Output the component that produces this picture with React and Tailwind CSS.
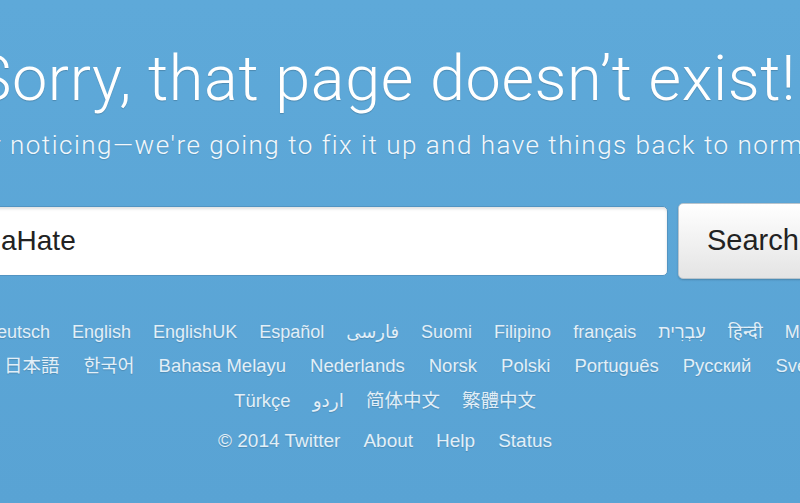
import React from 'react';

const ROW_ONE = ['Deutsch', 'English', 'EnglishUK', 'Español', 'فارسی', 'Suomi', 'Filipino', 'français', 'עִבְרִית', 'हिन्दी', 'Magyar'];
const ROW_TWO = ['日本語', '한국어', 'Bahasa Melayu', 'Nederlands', 'Norsk', 'Polski', 'Português', 'Русский', 'Svenska'];
const ROW_THREE = ['Türkçe', 'اردو', '简体中文', '繁體中文'];
const FOOTER = ['© 2014 Twitter', 'About', 'Help', 'Status'];

const linkFont = { fontFamily: '"Liberation Sans", "Noto Sans CJK JP", "Noto Sans CJK KR", "DejaVu Sans", sans-serif' };
const lightFont = { fontFamily: 'Roboto, "Liberation Sans", sans-serif' };

export default function App() {
  return (
    <div className="w-[800px] h-[503px] overflow-hidden bg-gradient-to-b from-[#5ea9d9] to-[#59a3d4]">
      {/* centred column, its axis sits at x=385 */}
      <div className="w-[1600px] -ml-[415px] flex flex-col items-center pt-[43px]">
        <h1
          className="whitespace-nowrap text-[63px] leading-[72px] tracking-[0.6px] font-light text-white [text-shadow:0_1px_1px_rgba(0,0,0,0.18)]"
          style={lightFont}
        >
          Sorry, that page doesn’t exist!
        </h1>
        <p
          className="mt-[15px] whitespace-nowrap text-[26px] leading-[30px] tracking-[1.5px] font-light text-[#f3f8fc] [text-shadow:0_1px_1px_rgba(0,0,0,0.12)]"
          style={lightFont}
        >
          Thanks for noticing—we're going to fix it up and have things back to normal soon.
        </p>

        <div className="mt-[43px] flex items-center gap-[10px]" style={{ fontFamily: '"Liberation Sans", sans-serif' }}>
          <div className="w-[721px] h-[70px] bg-white rounded-[5px] border border-[#5294c2] shadow-[inset_0_2px_3px_rgba(0,0,0,0.12)] flex items-center pl-[53px]">
            <span className="text-[28px] text-[#222]">aHate</span>
          </div>
          <div className="w-[145px] h-[76px] rounded-[5px] border border-[#b9c4cc] bg-gradient-to-b from-white to-[#e4e4e4] shadow-[0_1px_2px_rgba(0,0,0,0.2)] flex items-center pl-[28px]">
            <span className="text-[29px] text-[#222]">Search</span>
          </div>
        </div>
      </div>

      <div className="mt-[37px] flex flex-col text-[#e2eff8] [text-shadow:0_1px_1px_rgba(0,0,0,0.15)]" style={linkFont}>
        <div className="h-[33px] -ml-[16px] flex items-center gap-[22px] whitespace-nowrap text-[18px]">
          {ROW_ONE.map((l) => (
            <span key={l}>{l}</span>
          ))}
        </div>
        <div className="h-[34px] ml-[4px] flex items-center gap-[24px] whitespace-nowrap text-[18.5px]">
          {ROW_TWO.map((l) => (
            <span key={l}>{l}</span>
          ))}
        </div>
        <div className="w-[1600px] -ml-[415px] flex flex-col items-center">
          <div className="h-[36px] flex items-center gap-[22px] whitespace-nowrap text-[18.5px]">
            {ROW_THREE.map((l) => (
              <span key={l}>{l}</span>
            ))}
          </div>
          <div className="h-[42px] flex items-end gap-[23px] whitespace-nowrap pb-[6px] text-[19px]">
            {FOOTER.map((l) => (
              <span key={l}>{l}</span>
            ))}
          </div>
        </div>
      </div>
    </div>
  );
}
